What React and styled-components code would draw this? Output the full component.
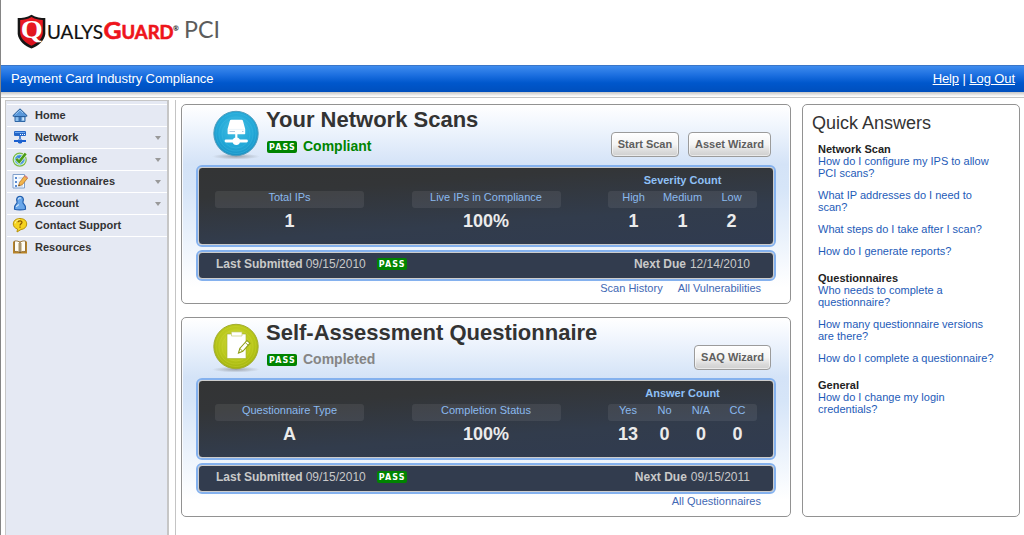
import React from "react";
import styled, { createGlobalStyle } from "styled-components";

const Global = createGlobalStyle`
  * { box-sizing: border-box; }
  html, body, #root { height: 100%; }
  body {
    margin: 0;
    overflow: hidden;
    background: #fff;
    font-family: "Liberation Sans", Arial, sans-serif;
    font-size: 11px;
    color: #333;
  }
`;

const Page = styled.div`
  display: flex;
  flex-direction: column;
  height: 535px;
  border-left: 1px solid #858585;
`;
const Header = styled.header`
  height: 65px;
  flex: none;
  padding: 10px 0 0 15px;
`;
const TitleBar = styled.div`
  height: 27px;
  flex: none;
  display: flex;
  justify-content: space-between;
  align-items: center;
  padding: 0 9px 2px 10px;
  border-top: 1px solid #3a76c8;
  background: linear-gradient(#3f8cee 0%, #1c6fe0 35%, #0057cc 65%, #004fbd 100%);
  color: #fff;
  font-size: 13px;
  letter-spacing: -0.09px;
`;
const BarLink = styled.a`
  color: #fff;
  text-decoration: underline;
`;
const Shade = styled.div`
  height: 6px;
  flex: none;
  border-bottom: 1px solid #c4c4c4;
  background: linear-gradient(#c4c4c4, #e6e6e6 50%, #fafafa 80%, #fff);
`;
const Body = styled.div`
  flex: 1;
  min-height: 0;
  display: flex;
  padding-top: 2px;
`;
const Sidebar = styled.nav`
  width: 164px;
  margin-left: 4px;
  border: solid #c6c6c6;
  border-width: 1px 2px 0 1px;
  background: #e5e9f3;
  padding: 3px 0 0 1px;
`;
const MenuItem = styled.div`
  display: flex;
  align-items: center;
  padding: 0 6px ${(p) => (p.$last ? 2 : 1)}px 5px;
  border-top: ${(p) => (p.$first ? "1px solid #fff" : "0")};
  border-bottom: ${(p) => (p.$last ? "0" : "1px solid #fff")};
  height: ${(p) => (p.$first ? 23 : 22)}px;
  font-weight: bold;
  color: #333;
  svg { flex: none; }
`;
const MenuLabel = styled.span`
  flex: 1;
  margin-left: 7px;
  margin-top: -1px;
`;
const Arrow = styled.i`
  border: solid transparent;
  border-width: 4px 3.5px 0;
  border-top-color: #999;
  margin-top: 1px;
`;
const Content = styled.main`
  flex: 1;
  display: flex;
  align-items: flex-start;
  margin-left: 6px;
  border-left: 1px solid #c4c4c4;
  padding: 4px 4px 0 5px;
`;
const Cards = styled.div`
  width: 610px;
  display: flex;
  flex-direction: column;
  gap: 13px;
`;
const Card = styled.section`
  height: 200px;
  border: 1px solid #929292;
  border-radius: 5px;
  padding: 0 14px;
  background: linear-gradient(#fff 0%, #f4f8fe 8%, #d4e3f7 30%, #d6e5f8 42%, #fff 92%);
  box-shadow: inset 0 0 0 1px rgba(255, 255, 255, 0.8);
`;
const CardHead = styled.div`
  height: 60px;
  display: flex;
  align-items: flex-start;
  padding-right: 5px;
`;
const IconSlot = styled.div`
  width: 50px;
  height: 52px;
  margin: 4px 0 0 15px;
`;
const Heading = styled.div`
  flex: 1;
  margin-left: 5px;
`;
const CardTitle = styled.h2`
  margin: 2px 0 0;
  font-size: 22px;
  line-height: 26px;
  color: #333;
  white-space: nowrap;
`;
const Status = styled.div`
  display: flex;
  align-items: center;
  gap: 6px;
  height: 18px;
  margin: 4px 0 0 1px;
  font-size: 14px;
  font-weight: bold;
  color: ${(p) => p.$color};
`;
const Badge = styled.span`
  width: 30px;
  height: 12px;
  margin-top: ${(p) => p.$drop || 0}px;
  border-radius: 2px;
  background: #008400;
  color: #fff;
  font: bold 8px/13px "DejaVu Sans", sans-serif;
  letter-spacing: 1.1px;
  text-align: center;
  padding-left: 1px;
`;
const Buttons = styled.div`
  display: flex;
  gap: 9px;
  margin-top: 27px;
`;
const Button = styled.button`
  width: ${(p) => p.$w}px;
  height: 25px;
  padding: 0 0 1px;
  border: 1px solid #9b9b9b;
  border-radius: 4px;
  background: linear-gradient(#fff 0%, #f4f4f4 50%, #dadada 80%, #cfcfcf 100%);
  box-shadow: inset 0 0 0 1px rgba(255, 255, 255, 0.55);
  color: #5e5e5e;
  font: bold 11px "Liberation Sans", Arial, sans-serif;
  white-space: nowrap;
`;
const Frame = styled.div`
  border: 2px solid #84b1ee;
  border-radius: 6px;
`;
const Stats = styled.div`
  height: 78px;
  border: 1px solid #cdcdcd;
  border-radius: 4px;
  background: linear-gradient(176deg, #333435 0%, #333537 25%, #323c4c 65%, #303b50 100%);
  padding: 5px 16px 0 16px;
  display: flex;
  justify-content: space-between;
`;
const StatGroup = styled.div`
  width: 149px;
  text-align: center;
`;
const GroupTitle = styled.div`
  height: 18px;
  line-height: 14px;
  font-weight: bold;
  color: #8fc0f6;
`;
const Labels = styled.div`
  height: 17px;
  display: flex;
  justify-content: center;
  border-radius: 3px;
  background: rgba(255, 255, 255, 0.075);
  color: #8ab9ee;
  line-height: 13px;
`;
const Values = styled.div`
  display: flex;
  justify-content: center;
  margin-top: 3px;
  font-size: 18px;
  line-height: 20px;
  font-weight: bold;
  color: #ebebeb;
`;
const Cell = styled.span`
  width: ${(p) => p.$w}px;
  white-space: nowrap;
`;
const Strip = styled.div`
  height: 27px;
  border: 1px solid #cdcdcd;
  border-radius: 4px;
  background: #323c4e;
  display: flex;
  justify-content: space-between;
  padding: 4px 23px 0 17px;
  font-size: 12px;
  line-height: 15px;
  color: #c9c9c9;
`;
const StripPart = styled.div`
  display: flex;
  gap: ${(p) => p.$gap}px;
`;
const BadgeGap = styled.span`
  margin: 1px 0 0 8px;
  display: flex;
  height: 12px;
`;
const Gap = styled.div`
  height: 3px;
`;
const CardLinks = styled.div`
  display: flex;
  justify-content: flex-end;
  gap: 15px;
  padding: 1px 15px 0 0;
  line-height: 13px;
`;
const Link = styled.a`
  color: #4268b4;
`;
const Quick = styled.aside`
  width: 218px;
  height: 413px;
  margin-left: 11px;
  border: 1px solid #929292;
  border-radius: 5px;
  padding: 6px 9px;
`;
const QuickTitle = styled.h2`
  margin: 0;
  font-size: 18px;
  line-height: 24px;
  font-weight: normal;
`;
const Topic = styled.div`
  margin: ${(p) => (p.$first ? 8 : 15)}px 0 0 6px;
  line-height: 12px;
`;
const TopicTitle = styled.div`
  font-weight: bold;
  color: #222;
`;
const Question = styled.a`
  display: block;
  color: #1e5bb8;
  white-space: pre-line;
  & + & { margin-top: 10px; }
`;

const Logo = () => (
  <svg width="210" height="42" viewBox="0 0 210 42">
    <defs>
      <linearGradient id="shield" x1="0" y1="0" x2="0" y2="1">
        <stop offset="0" stopColor="#ee1c25" />
        <stop offset="1" stopColor="#d8121c" />
      </linearGradient>
    </defs>
    <path d="M15.500 4.700C11 7.500 6 8 1.700 8V24C2.500 31 9 36 15.500 38.500C22 36 28.500 31 29.300 24V8C25 8 20 7.500 15.500 4.700Z" fill="#161616" />
    <path d="M15.500 7C11.500 9.200 8 9.900 4.200 10V23.500C5 29.200 10 33.300 15.500 35.700C21 33.300 26 29.200 26.800 23.500V10C23 9.900 19.500 9.200 15.500 7Z" fill="url(#shield)" />
    <text x="4.700" y="28.300" fontFamily="Liberation Serif, serif" fontWeight="bold" fontSize="26" fill="#fff" textLength="22" lengthAdjust="spacingAndGlyphs">Q</text>
    <text x="31" y="29" fontFamily="Lato, sans-serif" fontSize="18.500" fill="#111" stroke="#111" strokeWidth=".2" textLength="56" lengthAdjust="spacingAndGlyphs">UALYS</text>
    <text x="87.500" y="29" fontFamily="Lato, sans-serif" fontWeight="bold" fontSize="23" fill="#ee141b" stroke="#ee141b" strokeWidth=".6" textLength="18" lengthAdjust="spacingAndGlyphs">G</text>
    <text x="105.500" y="29" fontFamily="Lato, sans-serif" fontWeight="bold" fontSize="18.500" fill="#ee141b" stroke="#ee141b" strokeWidth=".6" textLength="52" lengthAdjust="spacingAndGlyphs">UARD</text>
    <text x="157" y="20.500" fontFamily="Lato, sans-serif" fontWeight="bold" fontSize="7" fill="#222">®</text>
    <text x="168" y="28.300" fontFamily="Lato, sans-serif" fontSize="23" fill="#5c5c5c" textLength="36" lengthAdjust="spacingAndGlyphs">PCI</text>
  </svg>
);

const icons = {
  home: (
    <>
      <path d="M3 8H13V14.500H3Z" fill="#8fc0ee" stroke="#2c65a4" />
      <path d="M.8 8.800L8 1.800L15.200 8.800L13.500 9.600H2.500Z" fill="#5a98da" stroke="#1f5796" />
      <path d="M3.500 7.300L8 3.200L11 6" fill="none" stroke="#9cc9f2" />
      <path d="M6.500 10H9.500V14.500H6.500Z" fill="#3b74b5" />
      <path d="M10.500 10.500H12V13H10.500Z" fill="#d5eafc" />
    </>
  ),
  network: (
    <>
      <rect x="2" y="2" width="12" height="5" rx="1" fill="#2466c8" />
      <path d="M3 3.500H13" stroke="#6fa8ee" />
      <path d="M8 5.500H9M10 5.500H11M12 5.500H13" stroke="#fff" />
      <path d="M8 7V10" stroke="#1c5fc4" strokeWidth="1.500" />
      <path d="M2 12H14" stroke="#1b5fd0" strokeWidth="2" />
      <path d="M6 10.500H10V13.500L9 14.500H7L6 13.500Z" fill="#1d63cf" />
    </>
  ),
  compliance: (
    <>
      <circle cx="7.700" cy="8.700" r="6.500" fill="#e6f6da" stroke="#78b944" strokeWidth="1.200" />
      <circle cx="7.700" cy="8.700" r="4.600" fill="#3f86d6" stroke="#68b8eb" />
      <path d="M4.300 7.800L7.200 10.800L13.700 2.500" fill="none" stroke="#e9f8dc" strokeWidth="3.800" />
      <path d="M4.300 7.800L7.200 10.800L13.700 2.500" fill="none" stroke="#4a9b16" strokeWidth="2.600" />
    </>
  ),
  questionnaires: (
    <>
      <path d="M1 1.500H12.500V15H1Z" fill="#f5faff" stroke="#7f9fcc" />
      <path d="M3 4H5V6H3ZM3 8H5V10H3ZM3 12H5V14H3Z" fill="#5c8bd0" />
      <path d="M6.500 5H11M6.500 9H8M6.500 13H11" stroke="#b5cbe6" />
      <path d="M6.500 13L7.500 9.500L12.500 3L15.500 5.200L10.300 11.700Z" fill="#f2b44c" stroke="#b5762b" strokeWidth=".8" />
      <path d="M12.200 3.500L13.300 2.200L15.900 4.200L15 5.600Z" fill="#d9837b" />
      <path d="M6.500 13L6.900 11.500L8 12.300Z" fill="#222" />
    </>
  ),
  account: (
    <>
      <path d="M8 1.300C5 1.300 4 4 5 6.500C5.500 7.800 5 8.500 4 9.300C2.500 10.500 2.300 12 2.500 14.200C5 15.200 11 15.200 13.500 14.200C13.700 12 13.500 10.500 12 9.300C11 8.500 10.500 7.800 11 6.500C12 4 11 1.300 8 1.300Z" fill="#69a6e9" stroke="#235fae" strokeWidth="1.200" />
      <path d="M6.300 4.500C6.500 2.900 8 2.600 9 3.200M4.300 12C4.600 10.500 6 10 7 9.500" fill="none" stroke="#cfe5fb" strokeWidth="1.200" />
    </>
  ),
  support: (
    <>
      <path d="M8 1.500C12 1.500 14.700 3.700 14.700 7C14.700 10.200 12 12.300 9 12.500L5 15L5.500 12C3 11.300 1.300 9.500 1.300 7C1.300 3.700 4 1.500 8 1.500Z" fill="#f5d321" stroke="#b8930a" />
      <path d="M3 6.500C3.300 3.500 6 2.800 8 2.800" fill="none" stroke="#fff3a0" />
      <path d="M6 5.300C6 3.400 10 3.400 10 5.200C10 6.800 8 6.700 8 8.500M8 9.500V10.700" fill="none" stroke="#8a5600" strokeWidth="1.200" />
    </>
  ),
  resources: (
    <>
      <path d="M1 2.500H15V14.500H1Z" fill="#b98426" />
      <path d="M2.500 2C5 1.700 7 2.300 8 3.500C9 2.300 11 1.700 13.500 2V12.500C11 12.200 9 12.600 8 13.700C7 12.600 5 12.200 2.500 12.500Z" fill="#fffdf5" stroke="#8a621f" strokeWidth=".8" />
      <path d="M8 3.500V14" stroke="#6b4b17" strokeWidth="1.200" />
      <path d="M6.500 4V12M9.500 4V12" stroke="#d8cba9" />
    </>
  ),
};

const menu = [
  ["home", "Home", false],
  ["network", "Network", true],
  ["compliance", "Compliance", true],
  ["questionnaires", "Questionnaires", true],
  ["account", "Account", true],
  ["support", "Contact Support", false],
  ["resources", "Resources", false],
];

const Disc = ({ id, light, mid, dark, rim, children }) => (
  <svg width="50" height="52" viewBox="0 0 50 52">
    <defs>
      <radialGradient id={id} cx=".5" cy=".4" r=".6">
        <stop offset="0" stopColor={light} />
        <stop offset=".65" stopColor={mid} />
        <stop offset="1" stopColor={dark} />
      </radialGradient>
      <radialGradient id={id + "Shadow"}>
        <stop offset="0" stopColor="#8c9097" stopOpacity=".75" />
        <stop offset="1" stopColor="#8c9097" stopOpacity="0" />
      </radialGradient>
    </defs>
    <ellipse cx="25" cy="47.500" rx="24" ry="3" fill={`url(#${id}Shadow)`} />
    <circle cx="25" cy="24.500" r="22.200" fill={`url(#${id})`} stroke={rim} strokeWidth="1" />
    <g fill="none" stroke={light} strokeOpacity=".4" strokeWidth=".9">
      <circle cx="25" cy="24.500" r="20" />
      <circle cx="25" cy="25" r="17" />
      <circle cx="25" cy="25" r="14" />
    </g>
    {children}
  </svg>
);

const NetworkDisc = () => (
  <Disc id="netDisc" light="#45bfe3" mid="#22a8d8" dark="#1a93c6" rim="#4f9dbd">
    <path d="M18.800 12Q19 10.700 20.300 10.700H30.500Q31.800 10.700 32 12L34.200 20V24.600Q34.200 25.200 33.600 25.200H17.200Q16.600 25.200 16.600 24.600V20Z" fill="#fff" />
    <path d="M17.500 20.400H33.300" stroke="#d9e8f2" strokeWidth=".5" />
    <path d="M18.500 22.500H24M31 22.500H32.500" stroke="#9dbbd8" strokeWidth=".8" />
    <path d="M25.300 25V30" stroke="#fff" strokeWidth="2.200" />
    <path d="M15 32H35.500" stroke="#fff" strokeWidth="2.800" strokeLinecap="round" />
    <circle cx="25.300" cy="32.300" r="3.700" fill="#fff" />
  </Disc>
);

const ClipboardDisc = () => (
  <Disc id="clipDisc" light="#d0d93c" mid="#b8c71a" dark="#a3b410" rim="#a3ad32">
    <path d="M16 12H35V36.500H16Z" fill="#fff" stroke="#a1ae32" strokeWidth=".6" />
    <path d="M20.500 10H31V14H20.500Z" fill="#fff" stroke="#c5cd78" strokeWidth=".7" />
    <path d="M27.500 31L28.800 26.500L36 18.500L39 21.200L31.800 29.300Z" fill="#fff" stroke="#8f9e16" strokeWidth="1.100" />
    <path d="M34.200 20.500L37.200 23.200M28.800 26.500L31.800 29.300" stroke="#8f9e16" strokeWidth=".9" />
  </Disc>
);

const StatBox = ({ title, cells }) => (
  <StatGroup>
    <GroupTitle>{title}</GroupTitle>
    <Labels>{cells.map((c) => <Cell key={c[0]} $w={c[2]}>{c[0]}</Cell>)}</Labels>
    <Values>{cells.map((c) => <Cell key={c[0]} $w={c[2]}>{c[1]}</Cell>)}</Values>
  </StatGroup>
);

const ReportCard = ({ icon, title, status, color, buttons, stats, due, links }) => (
  <Card>
    <CardHead>
      <IconSlot>{icon}</IconSlot>
      <Heading>
        <CardTitle>{title}</CardTitle>
        <Status $color={color}><Badge $drop={2}>PASS</Badge>{status}</Status>
      </Heading>
      <Buttons>{buttons.map(([t, w]) => <Button key={t} $w={w}>{t}</Button>)}</Buttons>
    </CardHead>
    <Frame><Stats>{stats.map((s, i) => <StatBox key={i} {...s} />)}</Stats></Frame>
    <Gap />
    <Frame>
      <Strip>
        <StripPart $gap={3}><b>Last Submitted</b><span>09/15/2010</span><BadgeGap><Badge>PASS</Badge></BadgeGap></StripPart>
        <StripPart $gap={4}><b>Next Due</b><span>{due}</span></StripPart>
      </Strip>
    </Frame>
    <CardLinks>{links.map((l) => <Link key={l}>{l}</Link>)}</CardLinks>
  </Card>
);

const topics = [
  ["Network Scan", ["How do I configure my IPS to allow\nPCI scans?", "What IP addresses do I need to\nscan?", "What steps do I take after I scan?", "How do I generate reports?"]],
  ["Questionnaires", ["Who needs to complete a\nquestionnaire?", "How many questionnaire versions\nare there?", "How do I complete a questionnaire?"]],
  ["General", ["How do I change my login\ncredentials?"]],
];

export default function App() {
  return (
    <Page>
      <Global />
      <Header><Logo /></Header>
      <TitleBar>
        <span>Payment Card Industry Compliance</span>
        <span><BarLink>Help</BarLink> | <BarLink>Log Out</BarLink></span>
      </TitleBar>
      <Shade />
      <Body>
        <Sidebar>
          {menu.map(([id, label, more], i) => (
            <MenuItem key={id} $first={i === 0} $last={i === menu.length - 1}>
              <svg width="16" height="16" viewBox="0 0 16 16">{icons[id]}</svg>
              <MenuLabel>{label}</MenuLabel>
              {more && <Arrow />}
            </MenuItem>
          ))}
        </Sidebar>
        <Content>
          <Cards>
            <ReportCard
              icon={<NetworkDisc />}
              title="Your Network Scans"
              status="Compliant"
              color="#008400"
              buttons={[["Start Scan", 68], ["Asset Wizard", 83]]}
              stats={[
                { cells: [["Total IPs", "1", 149]] },
                { cells: [["Live IPs in Compliance", "100%", 149]] },
                { title: "Severity Count", cells: [["High", "1", 49], ["Medium", "1", 49], ["Low", "2", 49]] },
              ]}
              due="12/14/2010"
              links={["Scan History", "All Vulnerabilities"]}
            />
            <ReportCard
              icon={<ClipboardDisc />}
              title="Self-Assessment Questionnaire"
              status="Completed"
              color="#858585"
              buttons={[["SAQ Wizard", 77]]}
              stats={[
                { cells: [["Questionnaire Type", "A", 149]] },
                { cells: [["Completion Status", "100%", 149]] },
                { title: "Answer Count", cells: [["Yes", "13", 37], ["No", "0", 36], ["N/A", "0", 37], ["CC", "0", 36]] },
              ]}
              due="09/15/2011"
              links={["All Questionnaires"]}
            />
          </Cards>
          <Quick>
            <QuickTitle>Quick Answers</QuickTitle>
            {topics.map(([t, qs], i) => (
              <Topic key={t} $first={i === 0}>
                <TopicTitle>{t}</TopicTitle>
                {qs.map((q) => <Question key={q}>{q}</Question>)}
              </Topic>
            ))}
          </Quick>
        </Content>
      </Body>
    </Page>
  );
}
